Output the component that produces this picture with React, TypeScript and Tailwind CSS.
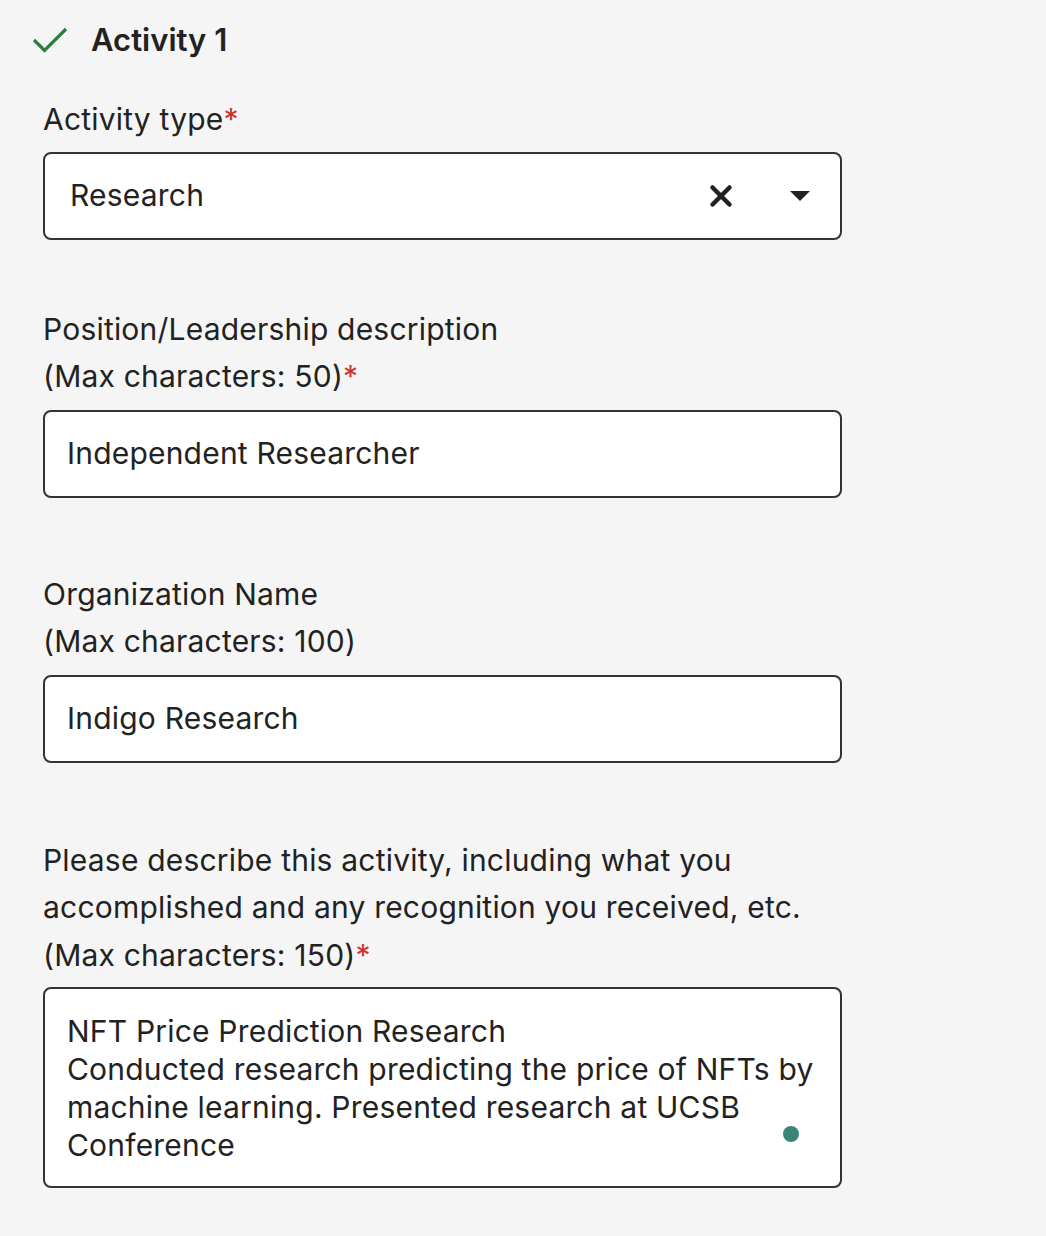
import { X } from 'lucide-react';

const font = { fontFamily: 'Inter, "Noto Sans", sans-serif' };

function Label({ lines, required }: { lines: string[]; required?: boolean }) {
    return (
        <div className="text-[30px] leading-[47.5px] tracking-[0.2px] text-[#222]">
            {lines.map((line, i) => (
                <div key={i}>
                    {line}
                    {required && i === lines.length - 1 && <span className="text-[#d32f2f]">*</span>}
                </div>
            ))}
        </div>
    );
}

function TextBox({ value }: { value: string }) {
    return (
        <div className="mt-[9px] h-[88px] rounded-lg border-2 border-[#333] bg-white pl-[22px] flex items-center text-[30px] tracking-[0.2px] text-[#222]">
            {value}
        </div>
    );
}

export default function App() {
    return (
        <div className="min-h-[1236px] w-[1046px] bg-[#f5f5f5]" style={font}>
            <div className="pl-[43px] pt-[16px] w-[842px]">
                {/* Header */}
                <div className="flex items-center h-[48px] -ml-[10px]">
                    <svg width="36" height="28" viewBox="0 0 36 28" className="shrink-0">
                        <path d="M1 14 L11.5 24.5 L33 3" fill="none" stroke="#2e7d40" strokeWidth="3.2" />
                    </svg>
                    <span className="ml-[22px] text-[31px] font-semibold text-[#222]">Activity 1</span>
                </div>

                {/* Activity type */}
                <div className="mt-[32px]">
                    <Label lines={['Activity type']} required />
                    <div className="mt-[8px] h-[88px] rounded-lg border-2 border-[#333] bg-white pl-[25px] pr-[30px] flex items-center text-[30px] tracking-[0.2px] text-[#222]">
                        <span className="flex-1">Research</span>
                        <X size={34} strokeWidth={3.2} className="text-[#222]" />
                        <svg width="20" height="10" viewBox="0 0 20 10" className="ml-[52px]">
                            <path d="M0 0 L20 0 L10 10 Z" fill="#222" />
                        </svg>
                    </div>
                </div>

                {/* Position */}
                <div className="mt-[66px]">
                    <Label lines={['Position/Leadership description', '(Max characters: 50)']} required />
                    <TextBox value="Independent Researcher" />
                </div>

                {/* Organization */}
                <div className="mt-[73px]">
                    <Label lines={['Organization Name', '(Max characters: 100)']} />
                    <TextBox value="Indigo Research" />
                </div>

                {/* Description */}
                <div className="mt-[74px]">
                    <Label
                        lines={[
                            'Please describe this activity, including what you',
                            'accomplished and any recognition you received, etc.',
                            '(Max characters: 150)',
                        ]}
                        required
                    />
                    <div className="relative mt-[8px] h-[201px] rounded-lg border-2 border-[#333] bg-white pl-[22px] pr-[20px] pt-[23px] text-[30px] leading-[38px] tracking-[0.2px] text-[#222]">
                        <div>NFT Price Prediction Research</div>
                        <div>Conducted research predicting the price of NFTs by machine learning. Presented research at UCSB Conference</div>
                        <span className="absolute left-[738px] top-[137px] w-[16px] h-[16px] rounded-full bg-[#3a8577]" />
                    </div>
                </div>
            </div>
        </div>
    );
}
